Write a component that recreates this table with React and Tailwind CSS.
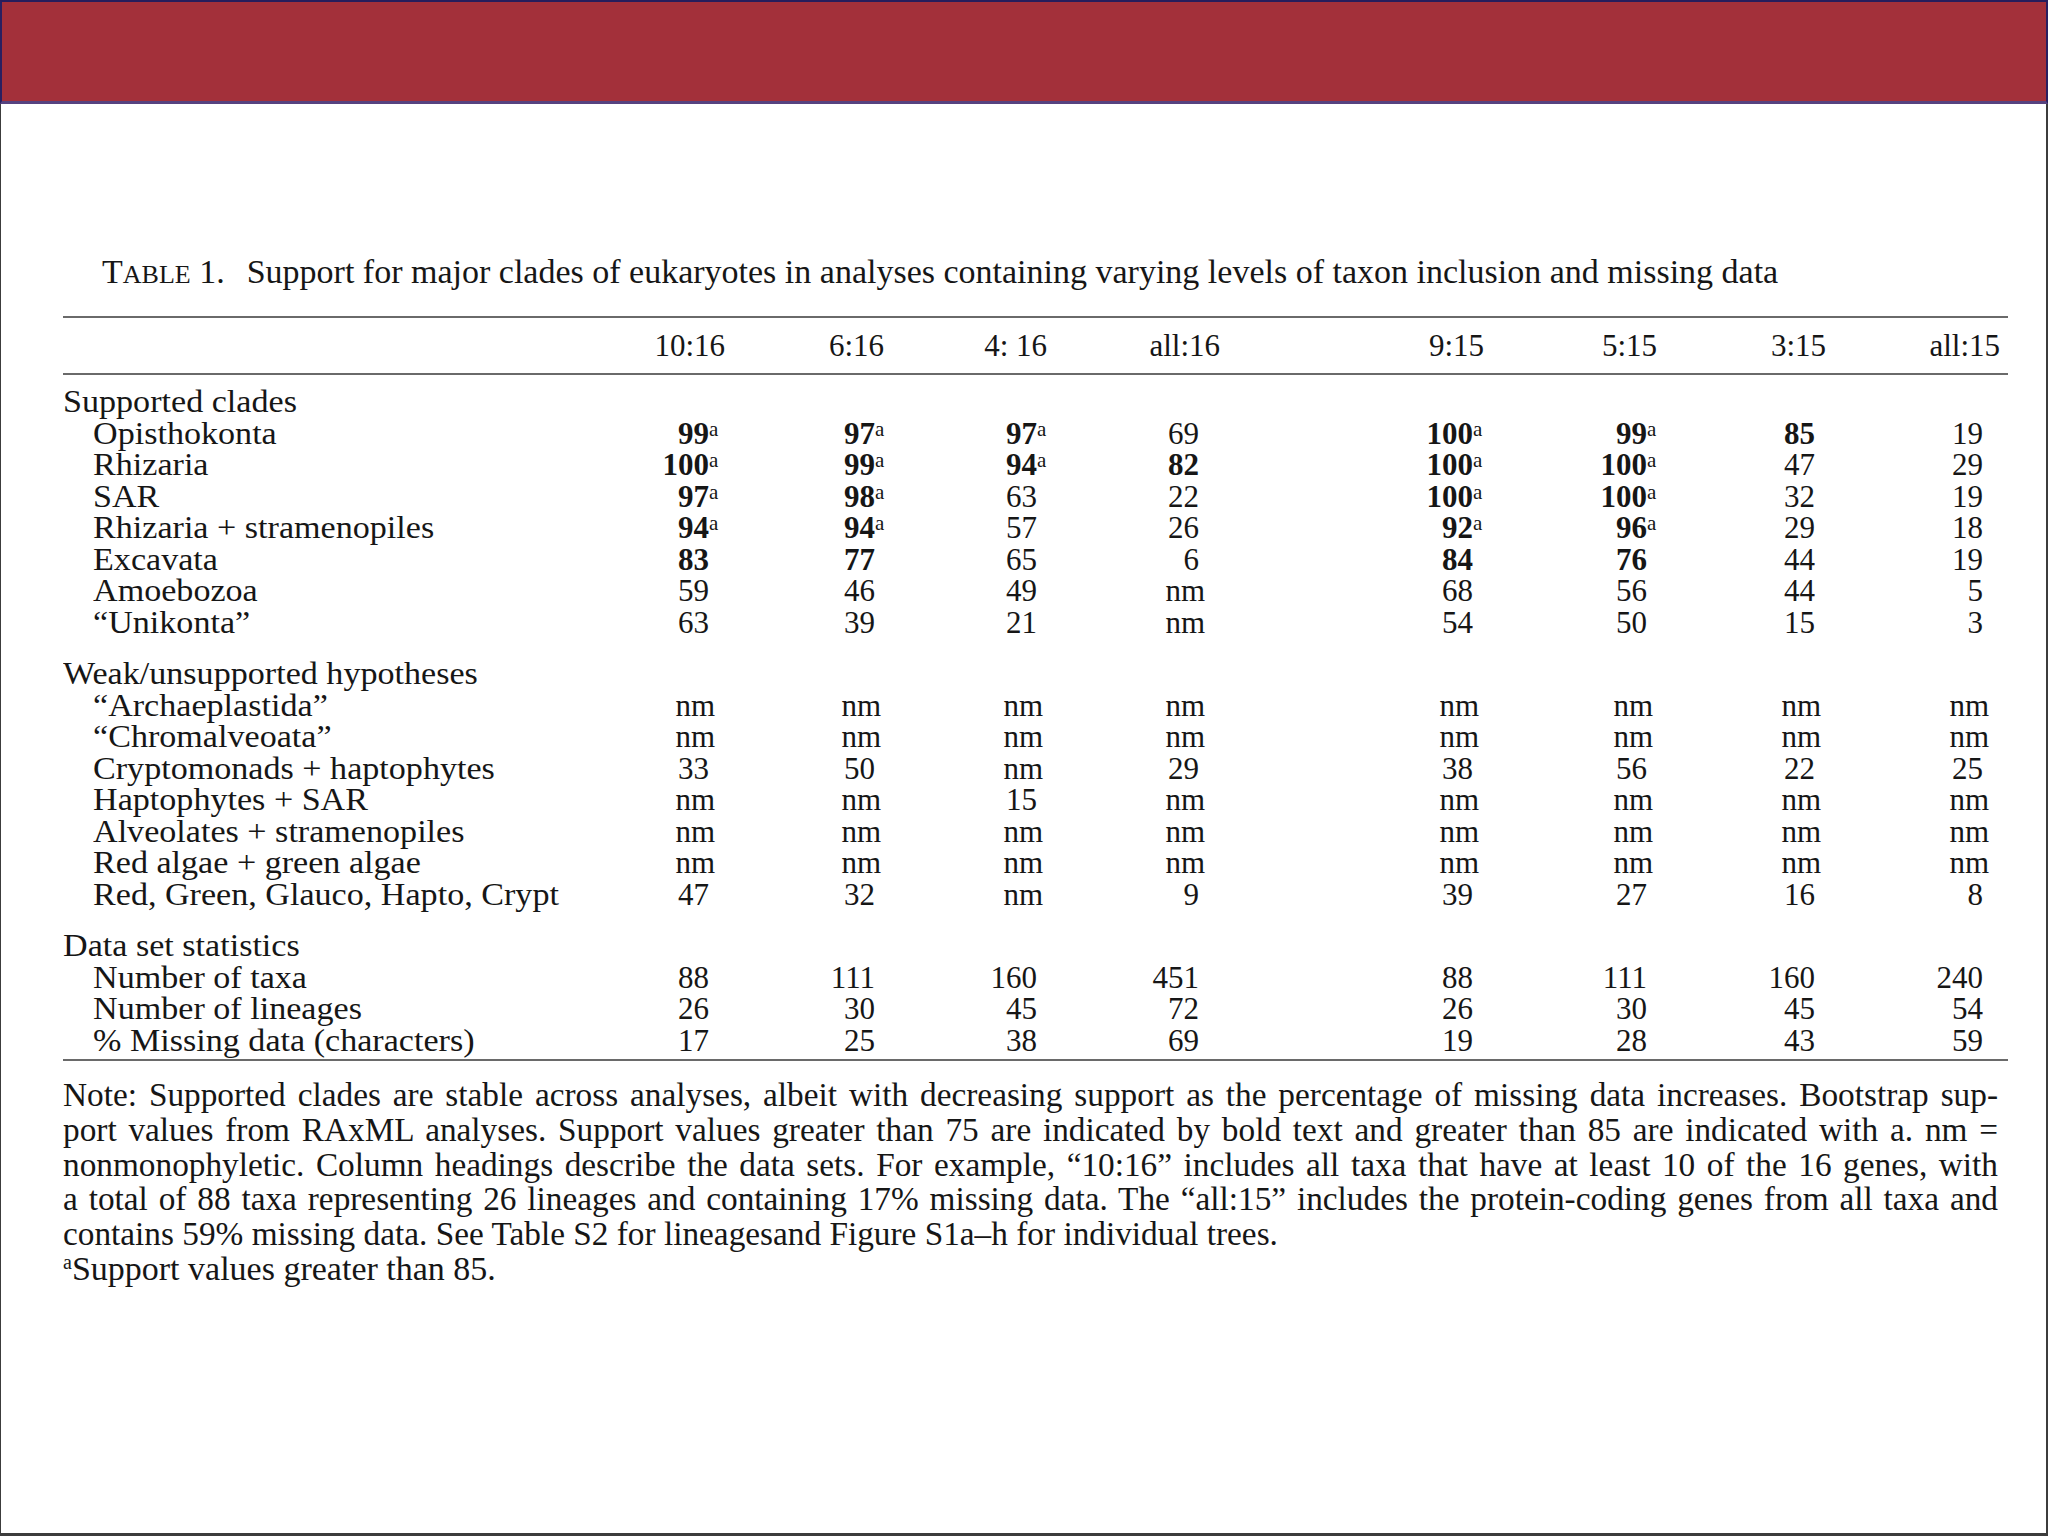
import React from "react";

const COLS = ["10:16", "6:16", "4: 16", "all:16", "9:15", "5:15", "3:15", "all:15"];
const HEAD_SHIFT = [
  "mr-[-16px]",
  "mr-[-9px]",
  "mr-[-10px]",
  "mr-[-21px]",
  "mr-[-11px]",
  "mr-[-10px]",
  "mr-[-11px]",
  "mr-[-17px]",
];

const SECTIONS = [
  {
    title: "Supported clades",
    rule: true,
    rows: [
      ["Opisthokonta", "99", "97", "97", "69", "100", "99", "85", "19"],
      ["Rhizaria", "100", "99", "94", "82", "100", "100", "47", "29"],
      ["SAR", "97", "98", "63", "22", "100", "100", "32", "19"],
      ["Rhizaria + stramenopiles", "94", "94", "57", "26", "92", "96", "29", "18"],
      ["Excavata", "83", "77", "65", "6", "84", "76", "44", "19"],
      ["Amoebozoa", "59", "46", "49", "nm", "68", "56", "44", "5"],
      ["\u201cUnikonta\u201d", "63", "39", "21", "nm", "54", "50", "15", "3"],
    ],
  },
  {
    title: "Weak/unsupported hypotheses",
    rule: true,
    rows: [
      ["\u201cArchaeplastida\u201d", "nm", "nm", "nm", "nm", "nm", "nm", "nm", "nm"],
      ["\u201cChromalveoata\u201d", "nm", "nm", "nm", "nm", "nm", "nm", "nm", "nm"],
      ["Cryptomonads + haptophytes", "33", "50", "nm", "29", "38", "56", "22", "25"],
      ["Haptophytes + SAR", "nm", "nm", "15", "nm", "nm", "nm", "nm", "nm"],
      ["Alveolates + stramenopiles", "nm", "nm", "nm", "nm", "nm", "nm", "nm", "nm"],
      ["Red algae + green algae", "nm", "nm", "nm", "nm", "nm", "nm", "nm", "nm"],
      ["Red, Green, Glauco, Hapto, Crypt", "47", "32", "nm", "9", "39", "27", "16", "8"],
    ],
  },
  {
    title: "Data set statistics",
    rule: false,
    rows: [
      ["Number of taxa", "88", "111", "160", "451", "88", "111", "160", "240"],
      ["Number of lineages", "26", "30", "45", "72", "26", "30", "45", "54"],
      ["% Missing data (characters)", "17", "25", "38", "69", "19", "28", "43", "59"],
    ],
  },
];

const GRID =
  "grid grid-cols-[537px_109px_166px_162px_162px_274px_174px_168px_168px]";

function Cell({ v, rule }) {
  if (v === "nm") {
    return (
      <div className="text-right">
        <span className="inline-block mr-[-6px]">nm</span>
      </div>
    );
  }
  const n = parseInt(v, 10);
  const bold = rule && n > 75;
  const sup = rule && n > 85;
  return (
    <div className="text-right">
      <span className={bold ? "font-bold" : ""}>{v}</span>
      {sup && (
        <span className="inline-block w-[11px] mr-[-11px] text-left text-[21px] leading-none align-[8px]">
          a
        </span>
      )}
    </div>
  );
}

function Label({ children, indent }) {
  return (
    <div className={`whitespace-nowrap ${indent ? "pl-[30px]" : ""}`}>
      <span className="inline-block origin-left scale-x-[1.1]">{children}</span>
    </div>
  );
}

const NOTE_LINES = [
  "Note: Supported clades are stable across analyses, albeit with decreasing support as the percentage of missing data increases. Bootstrap sup-",
  "port values from RAxML analyses. Support values greater than 75 are indicated by bold text and greater than 85 are indicated with a. nm =",
  "nonmonophyletic. Column headings describe the data sets. For example, \u201c10:16\u201d includes all taxa that have at least 10 of the 16 genes, with",
  "a total of 88 taxa representing 26 lineages and containing 17% missing data. The \u201call:15\u201d includes the protein-coding genes from all taxa and",
];

export default function App() {
  return (
    <div className="w-[2048px] h-[1536px] flex flex-col bg-white font-['Liberation_Serif',serif] text-[#161616]">
      <div className="h-[104px] shrink-0 bg-[#a3303a] border-t-2 border-l-2 border-r-2 border-t-[#271d5c] border-l-[#2a1f60] border-r-[#2a1f60] border-b-[3px] border-b-[#56427f]" />
      <div className="flex-1 border-l border-r-2 border-b-[3px] border-[#3c3c3c] pl-[62px] pr-[38px]">
        {/* caption */}
        <div className="mt-[150px] ml-[39px] flex items-baseline text-[34px] leading-[36px] whitespace-nowrap">
          <span>
            T<span className="text-[26px]">ABLE</span> 1.
          </span>
          <span className="ml-[22px]">
            Support for major clades of eukaryotes in analyses containing varying levels of taxon inclusion and missing data
          </span>
        </div>

        {/* table */}
        <div className="mt-[23px] text-[31px] leading-[31.5px]">
          <div className="border-t-2 border-[#6a6a6a]" />
          <div className={`${GRID} pt-[10px] pb-[9px] leading-[36px]`}>
            <div />
            {COLS.map((c, i) => (
              <div key={c} className="text-right">
                <span className={`inline-block ${HEAD_SHIFT[i]}`}>{c}</span>
              </div>
            ))}
          </div>
          <div className="border-t-2 border-[#6a6a6a]" />
          <div className="pt-[11px] pb-[3px] flex flex-col gap-[20px]">
            {SECTIONS.map((s) => (
              <div key={s.title}>
                <div className={GRID}>
                  <Label>{s.title}</Label>
                </div>
                {s.rows.map((r) => (
                  <div key={r[0]} className={GRID}>
                    <Label indent>{r[0]}</Label>
                    {r.slice(1).map((v, i) => (
                      <Cell key={i} v={v} rule={s.rule} />
                    ))}
                  </div>
                ))}
              </div>
            ))}
          </div>
          <div className="border-t-2 border-[#6a6a6a]" />
        </div>

        {/* note */}
        <div className="mt-[17px] pr-[10px] text-[33.3px] leading-[34.8px]">
          {NOTE_LINES.map((l) => (
            <div key={l} className="text-justify [text-align-last:justify] whitespace-nowrap">
              {l}
            </div>
          ))}
          <div>contains 59% missing data. See Table S2 for lineagesand Figure S1a–h for individual trees.</div>
          <div className="text-[34px] leading-[34.8px]">
            <span className="text-[20px] leading-none align-[11px]">a</span>Support values greater than 85.
          </div>
        </div>
      </div>
    </div>
  );
}
